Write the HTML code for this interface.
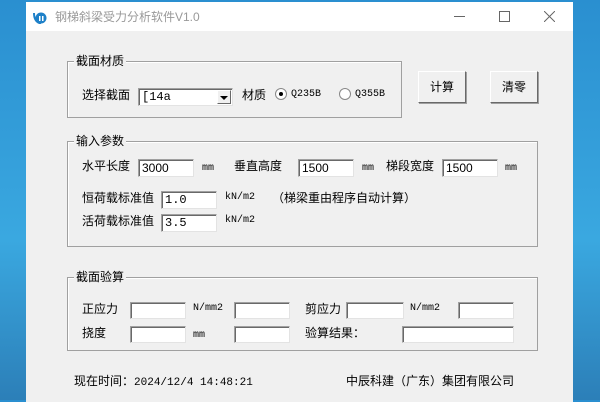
<!DOCTYPE html>
<html><head><meta charset="utf-8"><style>
*{margin:0;padding:0;box-sizing:border-box}
body{width:600px;height:400px;overflow:hidden;position:relative;font-family:"Liberation Sans","Noto Sans CJK SC","WenQuanYi Zen Hei",sans-serif;font-size:12px;color:#000;
background:linear-gradient(180deg,#2a8fd0 0%,#3aa8e0 60%,#2c7fb8 100%)}
.a{position:absolute;white-space:nowrap;line-height:18px}
#win{position:absolute;left:26px;top:2px;width:547px;height:400px;background:#f0f0f0}
#tb{position:absolute;left:0;top:0;width:547px;height:29px;background:#fff}
.g{position:absolute;border:1px solid #a0a0a0;box-shadow:1px 1px 0 #fff inset}
.gl{position:absolute;top:-9px;left:6px;background:#f0f0f0;padding:0 2px;font-size:12px;line-height:16px}
.in{position:absolute;background:#fff;border:1px solid;border-color:#a0a0a0 #e3e3e3 #e3e3e3 #a0a0a0;box-shadow:inset 1px 1px 0 #696969;font-size:12px;line-height:16px;padding-left:3px;font-family:"Liberation Sans",sans-serif}
.m{font-family:"Liberation Mono",monospace;font-size:10px}
.btn{position:absolute;background:#f0f0f0;border:1px solid;border-color:#fff #696969 #696969 #fff;box-shadow:1px 1px 0 #a0a0a0;text-align:center;line-height:30px;font-size:12px}
</style></head><body>
<div id="win">
<div id="tb">
<svg class="a" style="left:6px;top:8px" width="16" height="14" viewBox="0 0 16 14"><circle cx="9" cy="8" r="5.5" fill="#1e80c8"/><path d="M2 3 Q2 12 9 13.5" stroke="#1e80c8" stroke-width="2" fill="none"/><rect x="7" y="6" width="1.5" height="5" fill="#fff"/><rect x="10" y="6" width="1.5" height="5" fill="#fff"/></svg>
<div class="a" style="left:29px;top:6px;color:#999;font-size:12px">钢梯斜梁受力分析软件V1.0</div>
<div class="a" style="left:428px;top:14px;width:11px;height:1px;background:#666"></div>
<div class="a" style="left:473px;top:9px;width:11px;height:11px;border:1px solid #666"></div>
<svg class="a" style="left:518px;top:9px" width="11" height="11"><path d="M0 0L11 11M11 0L0 11" stroke="#666" stroke-width="1"/></svg>
</div>
</div>

<div class="g" style="left:67px;top:61px;width:335px;height:57px"><div class="gl">截面材质</div></div>
<div class="a" style="left:82px;top:86px">选择截面</div>
<div class="in" style="left:138px;top:88px;width:95px;height:18px;font-family:'Liberation Mono',monospace">[14a</div>
<div class="a" style="left:217px;top:90px;width:14px;height:14px;background:#f0f0f0;border:1px solid;border-color:#fff #696969 #696969 #fff"></div>
<div class="a" style="left:220px;top:96px;width:0;height:0;border-left:4px solid transparent;border-right:4px solid transparent;border-top:4px solid #000"></div>
<div class="a" style="left:242px;top:86px">材质</div>
<div class="a" style="left:275px;top:88px;width:12px;height:12px;border-radius:50%;background:#fff;border:1px solid #888"></div>
<div class="a" style="left:279px;top:92px;width:4px;height:4px;border-radius:50%;background:#000"></div>
<div class="a m" style="left:291px;top:86px">Q235B</div>
<div class="a" style="left:339px;top:88px;width:12px;height:12px;border-radius:50%;background:#fff;border:1px solid #888"></div>
<div class="a m" style="left:355px;top:86px">Q355B</div>
<div class="btn" style="left:418px;top:71px;width:48px;height:32px">计算</div>
<div class="btn" style="left:490px;top:71px;width:48px;height:32px">清零</div>

<div class="g" style="left:67px;top:141px;width:471px;height:106px"><div class="gl">输入参数</div></div>
<div class="a" style="left:82px;top:157px">水平长度</div>
<div class="in" style="left:138px;top:159px;width:56px;height:18px">3000</div>
<div class="a m" style="left:202px;top:160px">mm</div>
<div class="a" style="left:234px;top:157px">垂直高度</div>
<div class="in" style="left:298px;top:159px;width:56px;height:18px">1500</div>
<div class="a m" style="left:362px;top:160px">mm</div>
<div class="a" style="left:386px;top:157px">梯段宽度</div>
<div class="in" style="left:442px;top:159px;width:56px;height:18px">1500</div>
<div class="a m" style="left:505px;top:160px">mm</div>
<div class="a" style="left:82px;top:189px">恒荷载标准值</div>
<div class="in m" style="left:161px;top:191px;width:56px;height:18px;font-size:12px">1.0</div>
<div class="a m" style="left:225px;top:189px">kN/m2</div>
<div class="a" style="left:272px;top:189px">（梯梁重由程序自动计算）</div>
<div class="a" style="left:82px;top:212px">活荷载标准值</div>
<div class="in m" style="left:161px;top:214px;width:56px;height:18px;font-size:12px">3.5</div>
<div class="a m" style="left:225px;top:212px">kN/m2</div>

<div class="g" style="left:67px;top:277px;width:471px;height:74px"><div class="gl">截面验算</div></div>
<div class="a" style="left:82px;top:300px">正应力</div>
<div class="in" style="left:130px;top:302px;width:56px;height:17px"></div>
<div class="a m" style="left:193px;top:300px">N/mm2</div>
<div class="in" style="left:234px;top:302px;width:56px;height:17px"></div>
<div class="a" style="left:305px;top:300px">剪应力</div>
<div class="in" style="left:346px;top:302px;width:58px;height:17px"></div>
<div class="a m" style="left:410px;top:300px">N/mm2</div>
<div class="in" style="left:458px;top:302px;width:56px;height:17px"></div>
<div class="a" style="left:82px;top:324px">挠度</div>
<div class="in" style="left:130px;top:326px;width:56px;height:17px"></div>
<div class="a m" style="left:193px;top:327px">mm</div>
<div class="in" style="left:234px;top:326px;width:56px;height:17px"></div>
<div class="a" style="left:305px;top:324px">验算结果：</div>
<div class="in" style="left:402px;top:326px;width:112px;height:17px"></div>

<div class="a" style="left:74px;top:372px">现在时间：<span style="font-family:'Liberation Mono',monospace;font-size:11px">2024/12/4 14:48:21</span></div>
<div class="a" style="left:346px;top:372px">中辰科建（广东）集团有限公司</div>
</body></html>
